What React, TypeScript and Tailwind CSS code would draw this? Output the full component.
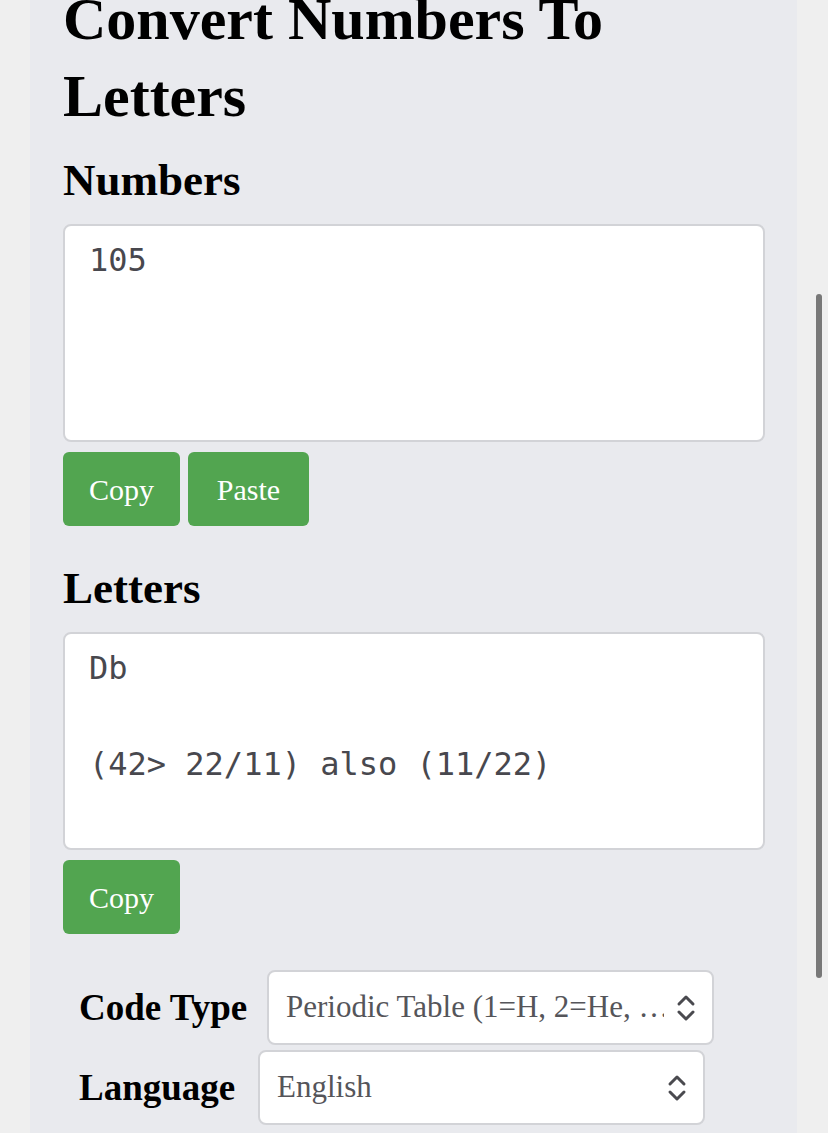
import React from "react";

const serif = "font-['Liberation_Serif',serif]";
const mono = "font-['DejaVu_Sans_Mono',monospace]";

function Chevrons() {
  return (
    <svg width="20" height="30" viewBox="0 0 20 30" fill="none" stroke="#4a4a4f" strokeWidth="3" strokeLinecap="round" strokeLinejoin="round">
      <path d="M3 11 L10 4 L17 11" />
      <path d="M3 19 L10 26 L17 19" />
    </svg>
  );
}

function GreenButton({ label, width }: { label: string; width: string }) {
  return (
    <button className={`${width} h-[74px] rounded-md bg-[#52a550] text-white text-[30px] ${serif} flex items-center justify-center`}>
      {label}
    </button>
  );
}

function TextBox({ lines }: { lines: string[] }) {
  return (
    <div className={`h-[218px] rounded-lg border-2 border-[#d2d3d7] bg-white px-[24px] py-[10px] ${mono} text-[32px] leading-[48px] text-[#48484e]`}>
      {lines.map((l, i) => (
        <div key={i} className="h-[48px] whitespace-pre">
          {l}
        </div>
      ))}
    </div>
  );
}

function SelectRow({ label, value, labelWidth }: { label: string; value: string; labelWidth: string }) {
  return (
    <div className="flex items-center pl-[16px]">
      <span className={`${labelWidth} shrink-0 text-[37px] font-bold text-black ${serif} whitespace-nowrap`}>{label}</span>
      <div className="w-[447px] h-[75px] rounded-lg border-2 border-[#d2d3d7] bg-white flex items-center pl-[17px] pr-[16px]">
        <span className={`flex-1 mr-[12px] overflow-hidden whitespace-nowrap text-[31px] text-[#55555a] ${serif}`}>{value}</span>
        <Chevrons />
      </div>
    </div>
  );
}

export default function App() {
  return (
    <div className="relative h-[1133px] overflow-hidden bg-[#efefef]">
      <div className="ml-[30px] w-[767px] h-full flex flex-col bg-[#e9eaee] pl-[33px] pr-[32px]">
        {/* Title */}
        <h1 className={`mt-[-19px] text-[60px] leading-[77px] font-bold text-black ${serif}`}>
          Convert Numbers To Letters
        </h1>

        <h2 className={`mt-[17px] text-[45px] leading-[56px] font-bold text-black ${serif}`}>Numbers</h2>
        <div className="mt-[16px]">
          <TextBox lines={["105"]} />
        </div>
        <div className="mt-[10px] flex gap-[8px]">
          <GreenButton label="Copy" width="w-[117px]" />
          <GreenButton label="Paste" width="w-[121px]" />
        </div>

        <h2 className={`mt-[34px] text-[45px] leading-[56px] font-bold text-black ${serif}`}>Letters</h2>
        <div className="mt-[16px]">
          <TextBox lines={["Db", "", "(42> 22/11) also (11/22)"]} />
        </div>
        <div className="mt-[10px] flex">
          <GreenButton label="Copy" width="w-[117px]" />
        </div>

        <div className="mt-[36px] flex flex-col gap-[5px]">
          <SelectRow label="Code Type" value="Periodic Table (1=H, 2=He, …)" labelWidth="w-[188px]" />
          <SelectRow label="Language" value="English" labelWidth="w-[179px]" />
        </div>
      </div>

      {/* overlay scrollbar */}
      <div className="absolute left-[816px] top-[294px] h-[684px] w-[6px] rounded-full bg-[#787878]" />
    </div>
  );
}
